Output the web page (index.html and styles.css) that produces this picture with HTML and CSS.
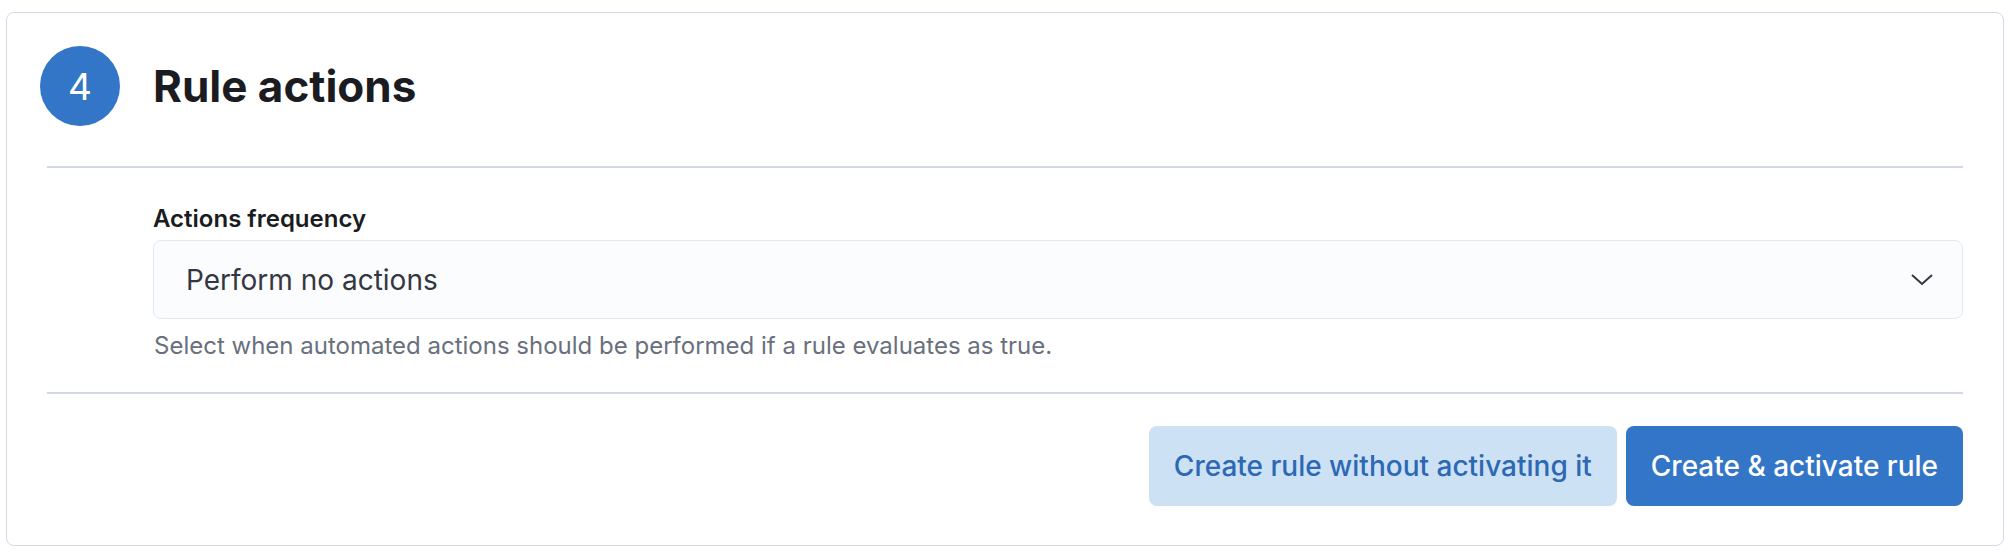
FILE: index.html
```html
<!DOCTYPE html>
<html lang="en">
<head>
<meta charset="utf-8">
<title>Rule actions</title>
<link rel="stylesheet" href="styles.css">
</head>
<body>
<section class="card">
  <header class="step-head">
    <span class="step-num">4</span>
    <h2 class="step-title">Rule actions</h2>
  </header>
  <hr class="divider">
  <div class="form-row">
    <label class="field-label" for="freq">Actions frequency</label>
    <div class="select">
      <span class="select-value" id="freq">Perform no actions</span>
      <svg class="chevron" width="24" height="14" viewBox="0 0 24 14" aria-hidden="true">
        <path d="M2 2 L12 11 L22 2" fill="none" stroke="#343741" stroke-width="2"/>
      </svg>
    </div>
    <p class="help">Select when automated actions should be performed if a rule evaluates as true.</p>
  </div>
  <hr class="divider">
  <div class="actions">
    <button class="btn btn-secondary">Create rule without activating it</button>
    <button class="btn btn-primary">Create &amp; activate rule</button>
  </div>
</section>
</body>
</html>
```

FILE: styles.css
```css
* { box-sizing: border-box; }
html, body { margin: 0; background: #ffffff; }
body {
  padding: 12px 6px 10px 6px;
  font-family: Inter, "Noto Sans", "Liberation Sans", sans-serif;
  color: #1a1c21;
}
.card {
  border: 1px solid #d3dae6;
  border-radius: 8px;
  height: 534px;
  padding: 33px 40px 39px 40px;
  display: flex;
  flex-direction: column;
}
.step-head {
  display: flex;
  align-items: center;
  gap: 33px;
  margin-left: -7px;
  height: 80px;
}
.step-num {
  width: 80px;
  height: 80px;
  border-radius: 50%;
  background: #3375c6;
  color: #ffffff;
  font-size: 37px;
  font-weight: 400;
  display: flex;
  align-items: center;
  justify-content: center;
  flex: none;
}
.step-title {
  margin: 0;
  font-size: 44px;
  font-weight: 700;
}
.divider {
  border: 0;
  height: 2px;
  background: #d3dae6;
  margin: 0;
}
.step-head + .divider { margin-top: 40px; }
.form-row {
  padding: 36px 0 32px 106px;
  display: flex;
  flex-direction: column;
}
.field-label {
  font-size: 24px;
  font-weight: 600;
  line-height: 29px;
  margin-bottom: 7px;
}
.select {
  height: 79px;
  border: 1px solid #e3e8f2;
  border-radius: 8px;
  background: #fbfcfd;
  display: flex;
  align-items: center;
  justify-content: space-between;
  padding: 0 28px 0 32px;
}
.select-value {
  font-size: 28px;
  color: #343741;
}
.help {
  margin: 12px 0 0 1px;
  font-size: 24px;
  line-height: 29px;
  color: #69707d;
}
.actions {
  display: flex;
  justify-content: flex-end;
  gap: 9px;
  margin-top: 32px;
}
.btn {
  height: 80px;
  border: 0;
  border-radius: 8px;
  font-family: Inter, "Noto Sans", "Liberation Sans", sans-serif;
  font-size: 28px;
  font-weight: 500;
  padding: 0 25px;
}
.btn-secondary {
  background: #cce1f4;
  color: #2c68b3;
}
.btn-primary {
  background: #3375c6;
  color: #ffffff;
}
```
